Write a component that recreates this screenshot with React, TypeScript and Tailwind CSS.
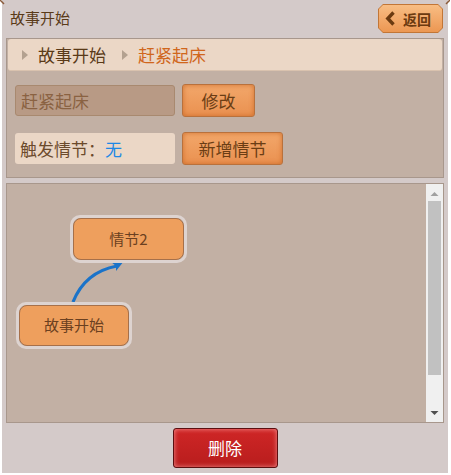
import React from "react";

const orangeBtn =
  "h-[33px] rounded-[3px] border border-[#b9713c] bg-gradient-to-b from-[#f2a76a] to-[#ea9150] shadow-[inset_0_0_5px_rgba(196,98,30,0.75)] text-[17px] text-[#6b3d14] flex items-center justify-center";

const Node: React.FC<{ label: string; className: string }> = ({ label, className }) => (
  <div className={`absolute rounded-[10px] border-[3px] border-[#ddd3d0] ${className}`}>
    <div className="w-full h-full rounded-[8px] border border-[#a6704a] bg-[#ee9f5d] flex items-center justify-center text-[15px] text-[#6b4020]">
      {label}
    </div>
  </div>
);

const Tri: React.FC = () => (
  <svg width="7" height="10" viewBox="0 0 7 10" className="shrink-0">
    <path d="M0 0 L6 5 L0 10 Z" fill="#b3a190" />
  </svg>
);

export default function App() {
  return (
    <div
      className="w-[451px] h-[475px] bg-white"
      style={{ fontFamily: '"Noto Sans CJK SC", "Noto Sans", sans-serif' }}
    >
      <div className="relative w-[446px] h-[473px] ml-[2px] bg-[#d4cac9] flex flex-col">
        {/* corner marks */}
        <svg className="absolute left-[-2px] top-0" width="6" height="6">
          <path d="M0 0 L4 4" stroke="#8a5a3a" strokeWidth="1.5" />
        </svg>
        <svg className="absolute right-[-2px] top-0" width="6" height="6">
          <path d="M6 0 L2 4" stroke="#8a5a3a" strokeWidth="1.5" />
        </svg>

        {/* header */}
        <div className="h-[38px] flex items-start justify-between pl-[8px] pr-[5px]">
          <span className="mt-[8px] text-[15px] leading-[20px] text-[#5a3a18]">故事开始</span>
          <div className="mt-[4px] w-[65px] h-[29px] bg-[#c27636] [clip-path:polygon(5px_0,calc(100%_-_5px)_0,100%_5px,100%_calc(100%_-_5px),calc(100%_-_5px)_100%,5px_100%,0_calc(100%_-_5px),0_5px)] p-px">
            <div className="w-full h-full bg-gradient-to-b from-[#f8bd83] to-[#ec9752] [clip-path:polygon(4px_0,calc(100%_-_4px)_0,100%_4px,100%_calc(100%_-_4px),calc(100%_-_4px)_100%,4px_100%,0_calc(100%_-_4px),0_4px)] flex items-center pl-[6px] gap-[8px]">
              <svg width="10" height="15" viewBox="0 0 10 15">
                <path d="M8.5 1.5 L2.8 7.5 L8.5 13.5" fill="none" stroke="#6b3a10" strokeWidth="3.4" strokeLinejoin="miter" />
              </svg>
              <span className="text-[14px] font-bold text-[#6b3a10] leading-none">返回</span>
            </div>
          </div>
        </div>

        {/* info panel */}
        <div className="mx-[4px] h-[140px] border border-[#a8978c] bg-[#c2b0a4] flex flex-col">
          <div className="h-[32px] mx-px rounded-[3px] bg-[#ebd7c6] border-b border-[#d9c2ae] flex items-center pl-[14px]">
            <Tri />
            <span className="ml-[9px] text-[17px] text-[#5a3a18]">故事开始</span>
            <span className="ml-[16px]"><Tri /></span>
            <span className="ml-[9px] text-[17px] text-[#d0661c]">赶紧起床</span>
          </div>
          <div className="mt-[13px] ml-[8px] flex items-center gap-[7px]">
            <div className="w-[160px] h-[31px] rounded-[3px] border border-[#a8896f] bg-[#b89a85] flex items-center pl-[5px] text-[17px] text-[#8a6242]">
              赶紧起床
            </div>
            <div className={`${orangeBtn} w-[73px]`}>修改</div>
          </div>
          <div className="mt-[15px] ml-[8px] flex items-center gap-[7px]">
            <div className="w-[160px] h-[31px] rounded-[3px] bg-[#ebd7c6] flex items-center pl-[5px] text-[17px] text-[#6b4a2c]">
              触发情节：<span className="text-[#1e88e5]">无</span>
            </div>
            <div className={`${orangeBtn} w-[101px]`}>新增情节</div>
          </div>
        </div>

        {/* canvas */}
        <div className="mt-[5px] mx-[4px] h-[240px] border border-[#a8978c] bg-[#c2b0a4] flex">
          <div className="relative flex-1">
            <svg className="absolute left-0 top-0" width="200" height="160">
              <path d="M66 118 Q78 88 110 82" fill="none" stroke="#1a73c9" strokeWidth="3.2" />
              <path d="M104 78 L117 77 L109 87 L109 82 Z" fill="#1a73c9" />
            </svg>
            <Node label="情节2" className="left-[63px] top-[31px] w-[117px] h-[48px]" />
            <Node label="故事开始" className="left-[9px] top-[118px] w-[116px] h-[47px]" />
          </div>
          <div className="w-[17px] bg-[#f0f0f0] flex flex-col items-center">
            <svg width="9" height="6" className="mt-[7px]">
              <path d="M0.5 5 L4.5 1 L8.5 5 Z" fill="#a0a0a0" />
            </svg>
            <div className="mt-[4px] w-[13px] h-[174px] bg-[#c1c1c1]" />
            <svg width="9" height="6" className="mt-auto mb-[6px]">
              <path d="M0.5 1 L4.5 5 L8.5 1 Z" fill="#505050" />
            </svg>
          </div>
        </div>

        {/* footer */}
        <div className="flex justify-center pt-[5px]">
          <div className="w-[105px] h-[40px] rounded-[3px] border border-[#5c0f10] bg-gradient-to-b from-[#cf2626] to-[#b81d1d] shadow-[inset_0_0_5px_rgba(255,170,170,0.8)] flex items-center justify-center text-[17px] text-white">
            删除
          </div>
        </div>
      </div>
    </div>
  );
}
